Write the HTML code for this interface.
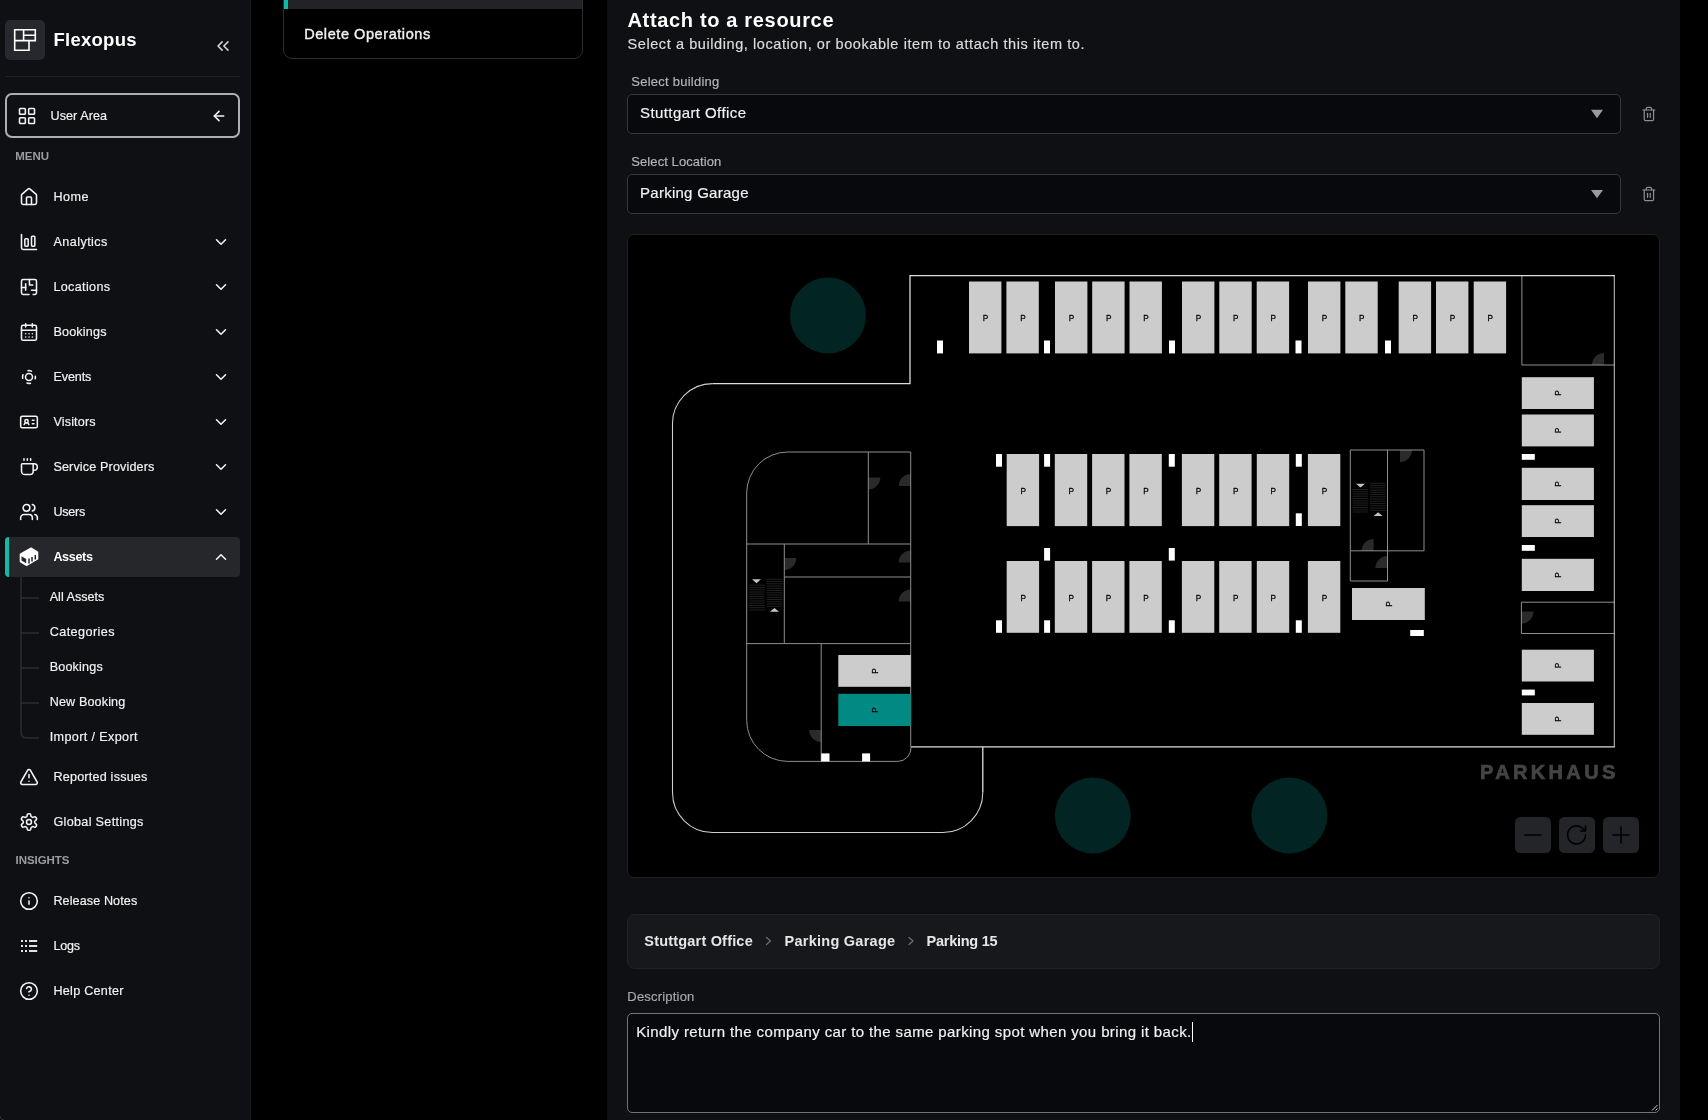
<!DOCTYPE html>
<html lang="en">
<head>
<meta charset="utf-8">
<title>Flexopus - Attach to a resource</title>
<style>
html,body{margin:0;padding:0;background:#000;}
body{width:1708px;height:1120px;position:relative;overflow:hidden;font-family:'Liberation Sans',sans-serif;}
.a{position:absolute;box-sizing:border-box;}
.t{position:absolute;white-space:pre;line-height:20px;font-family:'Liberation Sans',sans-serif;}
svg{position:absolute;overflow:visible;}
.ic{fill:none;stroke:#f4f4f4;stroke-width:1.9;stroke-linecap:round;stroke-linejoin:round;}
</style>
</head>
<body>
<div id="root" style="position:absolute;left:0;top:0;width:1708px;height:1120px;will-change:transform;">
<aside aria-label="Sidebar navigation">
<div class="a" id="sidebar" style="left:0;top:0;width:250px;height:1120px;background:#0f1014;"></div>
<div class="a" style="left:250px;top:0;width:1px;height:1120px;background:#1b1c20;"></div>
<div class="a" style="left:5px;top:20px;width:40px;height:40px;border-radius:5px;background:#26282d;"></div>
<div class="a" style="left:5px;top:76px;width:235px;height:1px;background:#1f2125;"></div>
<div class="a" style="left:5px;top:93px;width:235px;height:45px;border:2px solid #aeafb2;border-radius:7px;"></div>
<!-- active item -->
<div class="a" style="left:5px;top:537px;width:235px;height:40px;border-radius:4px;background:#26272b;overflow:hidden;"><div class="a" style="left:0;top:0;width:4px;height:40px;background:#14b8a6;"></div></div>
<!-- tree -->
<svg width="250" height="1120" style="left:0;top:0" fill="none" stroke="#2b2d31" stroke-width="1.5">
<path d="M21 577 V732 Q21 738 27 738 H39"/>
<path d="M21 598 H39 M21 633 H39 M21 668 H39 M21 703 H39"/>
</svg>
<svg width="40" height="40" style="left:5px;top:20px" fill="none" stroke="#ffffff" stroke-width="1.6"><path d="M9.7 9.7 H30.3 V20.6 H9.7 Z M18.6 9.7 V20.6 M18.6 15.2 H30.3 M9.7 20.6 V30.2 H24 V20.6"/></svg>
<svg width="20" height="20" viewBox="0 0 24 24" style="left:213px;top:36px" fill="none" stroke="#cfd2d9" stroke-width="1.86" stroke-linecap="round" stroke-linejoin="round" ><path d="m11 17-5-5 5-5"/><path d="m18 17-5-5 5-5"/></svg>
<svg width="20" height="20" viewBox="0 0 24 24" style="left:17px;top:106px" fill="none" stroke="#f4f4f4" stroke-width="1.86" stroke-linecap="round" stroke-linejoin="round" ><rect width="7" height="7" x="3" y="3" rx="1"/><rect width="7" height="7" x="14" y="3" rx="1"/><rect width="7" height="7" x="14" y="14" rx="1"/><rect width="7" height="7" x="3" y="14" rx="1"/></svg>
<svg width="16" height="16" viewBox="0 0 24 24" style="left:210.9px;top:108.1px" fill="none" stroke="#f4f4f4" stroke-width="2.33" stroke-linecap="round" stroke-linejoin="round" ><path d="m12 19-7-7 7-7"/><path d="M19 12H5"/></svg>
<svg width="20" height="20" viewBox="0 0 24 24" style="left:19px;top:186.5px" fill="none" stroke="#f4f4f4" stroke-width="1.86" stroke-linecap="round" stroke-linejoin="round" ><path d="M15 21v-8a1 1 0 0 0-1-1h-4a1 1 0 0 0-1 1v8"/><path d="M3 10a2 2 0 0 1 .709-1.528l7-5.999a2 2 0 0 1 2.582 0l7 5.999A2 2 0 0 1 21 10v9a2 2 0 0 1-2 2H5a2 2 0 0 1-2-2z"/></svg>
<svg width="20" height="20" viewBox="0 0 24 24" style="left:19px;top:232.0px" fill="none" stroke="#f4f4f4" stroke-width="1.86" stroke-linecap="round" stroke-linejoin="round" ><path d="M3 3v16a2 2 0 0 0 2 2h16"/><rect x="15" y="5" width="4" height="12" rx="1"/><rect x="7" y="8" width="4" height="9" rx="1"/></svg>
<svg width="20" height="20" viewBox="0 0 24 24" style="left:19px;top:277.0px" fill="none" stroke="#f4f4f4" stroke-width="1.86" stroke-linecap="round" stroke-linejoin="round" ><path d="M12 21H5a2 2 0 0 1-2-2V5a2 2 0 0 1 2-2h14a2 2 0 0 1 2 2v14a2 2 0 0 1-2 2h-2"/><path d="M3 12.5h5"/><path d="M8 8v8"/><path d="M12.5 3v6.5h4"/><path d="M15 16h6"/></svg>
<svg width="20" height="20" viewBox="0 0 24 24" style="left:19px;top:322.0px" fill="none" stroke="#f4f4f4" stroke-width="1.86" stroke-linecap="round" stroke-linejoin="round" ><path d="M8 2v4"/><path d="M16 2v4"/><rect width="18" height="18" x="3" y="4" rx="2"/><path d="M3 10h18"/><path d="M8 14h.01"/><path d="M12 14h.01"/><path d="M16 14h.01"/><path d="M8 18h.01"/><path d="M12 18h.01"/><path d="M16 18h.01"/></svg>
<svg width="20" height="20" viewBox="0 0 24 24" style="left:19px;top:367.0px" fill="none" stroke="#f4f4f4" stroke-width="1.86" stroke-linecap="round" stroke-linejoin="round" ><circle cx="12" cy="12" r="4.2"/><circle cx="12" cy="12" r="7.7" stroke-dasharray="4.4 7.695" stroke-dashoffset="2.2"/></svg>
<svg width="20" height="20" viewBox="0 0 24 24" style="left:19px;top:412.0px" fill="none" stroke="#f4f4f4" stroke-width="1.86" stroke-linecap="round" stroke-linejoin="round" ><path d="M16 10h2"/><path d="M16 14h2"/><path d="M6.17 15a3 3 0 0 1 5.66 0"/><circle cx="9" cy="11" r="2"/><rect x="2" y="5" width="20" height="14" rx="2"/></svg>
<svg width="20" height="20" viewBox="0 0 24 24" style="left:19px;top:457.0px" fill="none" stroke="#f4f4f4" stroke-width="1.86" stroke-linecap="round" stroke-linejoin="round" ><path d="M10 2v2"/><path d="M14 2v2"/><path d="M16 8a1 1 0 0 1 1 1v8a4 4 0 0 1-4 4H7a4 4 0 0 1-4-4V9a1 1 0 0 1 1-1h14a4 4 0 1 1 0 8h-1"/><path d="M6 2v2"/></svg>
<svg width="20" height="20" viewBox="0 0 24 24" style="left:19px;top:501.6px" fill="none" stroke="#f4f4f4" stroke-width="1.86" stroke-linecap="round" stroke-linejoin="round" ><path d="M16 21v-2a4 4 0 0 0-4-4H6a4 4 0 0 0-4 4v2"/><circle cx="9" cy="7" r="4"/><path d="M22 21v-2a4 4 0 0 0-3-3.87"/><path d="M16 3.13a4 4 0 0 1 0 7.75"/></svg>
<svg width="250" height="1120" style="left:0;top:0"><path d="M31.1 548.2 L37.6 552.2 V559 L26.6 565.4 L20.4 561.6 V554.2 Z" fill="#ffffff" stroke="#ffffff" stroke-width="1.4" stroke-linejoin="round"/><path d="M21.5 556.3 L26.2 559.1 V563.3 L21.5 560.4 Z" fill="#26272b"/><path d="M29 558.6 V563.4 M32 556.9 V561.6 M35.3 555 V559.6" stroke="#26272b" stroke-width="1.5"/></svg>
<svg width="20" height="20" viewBox="0 0 24 24" style="left:19px;top:767.0px" fill="none" stroke="#f4f4f4" stroke-width="1.86" stroke-linecap="round" stroke-linejoin="round" ><path d="m21.73 18-8-14a2 2 0 0 0-3.48 0l-8 14A2 2 0 0 0 4 21h16a2 2 0 0 0 1.73-3"/><path d="M12 9v4"/><path d="M12 17h.01"/></svg>
<svg width="20" height="20" viewBox="0 0 24 24" style="left:19px;top:812.0px" fill="none" stroke="#f4f4f4" stroke-width="1.86" stroke-linecap="round" stroke-linejoin="round" ><path d="M12.22 2h-.44a2 2 0 0 0-2 2v.18a2 2 0 0 1-1 1.73l-.43.25a2 2 0 0 1-2 0l-.15-.08a2 2 0 0 0-2.73.73l-.22.38a2 2 0 0 0 .73 2.73l.15.1a2 2 0 0 1 1 1.72v.51a2 2 0 0 1-1 1.74l-.15.09a2 2 0 0 0-.73 2.73l.22.38a2 2 0 0 0 2.73.73l.15-.08a2 2 0 0 1 2 0l.43.25a2 2 0 0 1 1 1.73V20a2 2 0 0 0 2 2h.44a2 2 0 0 0 2-2v-.18a2 2 0 0 1 1-1.73l.43-.25a2 2 0 0 1 2 0l.15.08a2 2 0 0 0 2.73-.73l.22-.39a2 2 0 0 0-.73-2.73l-.15-.08a2 2 0 0 1-1-1.74v-.5a2 2 0 0 1 1-1.74l.15-.09a2 2 0 0 0 .73-2.73l-.22-.38a2 2 0 0 0-2.73-.73l-.15.08a2 2 0 0 1-2 0l-.43-.25a2 2 0 0 1-1-1.73V4a2 2 0 0 0-2-2z"/><circle cx="12" cy="12" r="3"/></svg>
<svg width="20" height="20" viewBox="0 0 24 24" style="left:19px;top:891.0px" fill="none" stroke="#f4f4f4" stroke-width="1.86" stroke-linecap="round" stroke-linejoin="round" ><circle cx="12" cy="12" r="10"/><path d="M12 16v-4"/><path d="M12 8h.01"/></svg>
<svg width="250" height="1120" style="left:0;top:0" fill="#e2e2e2"><rect x="21" y="940" width="2" height="2"/><rect x="25" y="940" width="2" height="2"/><rect x="29" y="940" width="8.2" height="2"/><rect x="21" y="945" width="2" height="2"/><rect x="25" y="945" width="2" height="2"/><rect x="29" y="945" width="8.2" height="2"/><rect x="21" y="950" width="2" height="2"/><rect x="25" y="950" width="2" height="2"/><rect x="29" y="950" width="8.2" height="2"/></svg>
<svg width="20" height="20" viewBox="0 0 24 24" style="left:19px;top:981.0px" fill="none" stroke="#f4f4f4" stroke-width="1.86" stroke-linecap="round" stroke-linejoin="round" ><circle cx="12" cy="12" r="10"/><path d="M9.09 9a3 3 0 0 1 5.83 1c0 2-3 3-3 3"/><path d="M12 17h.01"/></svg>
<svg width="18" height="18" viewBox="0 0 24 24" style="left:212px;top:233px" fill="none" stroke="#f4f4f4" stroke-width="2.07" stroke-linecap="round" stroke-linejoin="round" ><path d="m6 9 6 6 6-6"/></svg>
<svg width="18" height="18" viewBox="0 0 24 24" style="left:212px;top:278px" fill="none" stroke="#f4f4f4" stroke-width="2.07" stroke-linecap="round" stroke-linejoin="round" ><path d="m6 9 6 6 6-6"/></svg>
<svg width="18" height="18" viewBox="0 0 24 24" style="left:212px;top:323px" fill="none" stroke="#f4f4f4" stroke-width="2.07" stroke-linecap="round" stroke-linejoin="round" ><path d="m6 9 6 6 6-6"/></svg>
<svg width="18" height="18" viewBox="0 0 24 24" style="left:212px;top:368px" fill="none" stroke="#f4f4f4" stroke-width="2.07" stroke-linecap="round" stroke-linejoin="round" ><path d="m6 9 6 6 6-6"/></svg>
<svg width="18" height="18" viewBox="0 0 24 24" style="left:212px;top:413px" fill="none" stroke="#f4f4f4" stroke-width="2.07" stroke-linecap="round" stroke-linejoin="round" ><path d="m6 9 6 6 6-6"/></svg>
<svg width="18" height="18" viewBox="0 0 24 24" style="left:212px;top:458px" fill="none" stroke="#f4f4f4" stroke-width="2.07" stroke-linecap="round" stroke-linejoin="round" ><path d="m6 9 6 6 6-6"/></svg>
<svg width="18" height="18" viewBox="0 0 24 24" style="left:212px;top:503px" fill="none" stroke="#f4f4f4" stroke-width="2.07" stroke-linecap="round" stroke-linejoin="round" ><path d="m6 9 6 6 6-6"/></svg>
<svg width="18" height="18" viewBox="0 0 24 24" style="left:212px;top:548px" fill="none" stroke="#f4f4f4" stroke-width="2.07" stroke-linecap="round" stroke-linejoin="round" ><path d="m18 15-6-6-6 6"/></svg>
<svg width="6" height="6" style="left:0;top:1114px"><path d="M0 2.5 A3.5 3.5 0 0 0 3.5 6 L0 6 Z" fill="#000"/><path d="M0 2 A4 4 0 0 0 4 6" fill="none" stroke="#2b2d31" stroke-width="1"/></svg>
<span class="t" style="left:53.5px;top:29.59px;font-size:18.5px;font-weight:700;color:#ffffff;letter-spacing:0.254px">Flexopus</span>
<span class="t" style="-webkit-text-stroke:0.18px #f2f2f2;left:50.5px;top:105.93px;font-size:12.6px;font-weight:400;color:#f2f2f2;letter-spacing:0.062px">User Area</span>
<span class="t" style="left:15.3px;top:146.02px;font-size:11.5px;font-weight:700;color:#9b9c9f;letter-spacing:-0.058px">MENU</span>
<span class="t" style="-webkit-text-stroke:0.18px #f2f2f2;left:53.4px;top:186.63px;font-size:12.6px;font-weight:400;color:#f2f2f2;letter-spacing:0.469px">Home</span>
<span class="t" style="-webkit-text-stroke:0.18px #f2f2f2;left:53.4px;top:231.63px;font-size:12.6px;font-weight:400;color:#f2f2f2;letter-spacing:0.449px">Analytics</span>
<span class="t" style="-webkit-text-stroke:0.18px #f2f2f2;left:53.4px;top:276.63px;font-size:12.6px;font-weight:400;color:#f2f2f2;letter-spacing:0.347px">Locations</span>
<span class="t" style="-webkit-text-stroke:0.18px #f2f2f2;left:53.4px;top:321.63px;font-size:12.6px;font-weight:400;color:#f2f2f2;letter-spacing:0.184px">Bookings</span>
<span class="t" style="-webkit-text-stroke:0.18px #f2f2f2;left:53.4px;top:366.63px;font-size:12.6px;font-weight:400;color:#f2f2f2;letter-spacing:-0.103px">Events</span>
<span class="t" style="-webkit-text-stroke:0.18px #f2f2f2;left:53.4px;top:411.63px;font-size:12.6px;font-weight:400;color:#f2f2f2;letter-spacing:0.163px">Visitors</span>
<span class="t" style="-webkit-text-stroke:0.18px #f2f2f2;left:53.4px;top:456.63px;font-size:12.6px;font-weight:400;color:#f2f2f2;letter-spacing:0.145px">Service Providers</span>
<span class="t" style="-webkit-text-stroke:0.18px #f2f2f2;left:53.4px;top:501.63px;font-size:12.6px;font-weight:400;color:#f2f2f2;letter-spacing:-0.223px">Users</span>
<span class="t" style="left:53.4px;top:546.63px;font-size:12.6px;font-weight:700;color:#ffffff;letter-spacing:-0.362px">Assets</span>
<span class="t" style="-webkit-text-stroke:0.18px #f2f2f2;left:49.7px;top:586.63px;font-size:12.6px;font-weight:400;color:#f2f2f2;letter-spacing:0.012px">All Assets</span>
<span class="t" style="-webkit-text-stroke:0.18px #f2f2f2;left:49.7px;top:621.63px;font-size:12.6px;font-weight:400;color:#f2f2f2;letter-spacing:0.433px">Categories</span>
<span class="t" style="-webkit-text-stroke:0.18px #f2f2f2;left:49.7px;top:656.63px;font-size:12.6px;font-weight:400;color:#f2f2f2;letter-spacing:0.170px">Bookings</span>
<span class="t" style="-webkit-text-stroke:0.18px #f2f2f2;left:49.7px;top:691.63px;font-size:12.6px;font-weight:400;color:#f2f2f2;letter-spacing:0.138px">New Booking</span>
<span class="t" style="-webkit-text-stroke:0.18px #f2f2f2;left:49.7px;top:726.63px;font-size:12.6px;font-weight:400;color:#f2f2f2;letter-spacing:0.372px">Import / Export</span>
<span class="t" style="-webkit-text-stroke:0.18px #f2f2f2;left:53.4px;top:766.63px;font-size:12.6px;font-weight:400;color:#f2f2f2;letter-spacing:0.213px">Reported issues</span>
<span class="t" style="-webkit-text-stroke:0.18px #f2f2f2;left:53.4px;top:811.63px;font-size:12.6px;font-weight:400;color:#f2f2f2;letter-spacing:0.327px">Global Settings</span>
<span class="t" style="left:15.5px;top:850.42px;font-size:11.5px;font-weight:700;color:#9b9c9f;letter-spacing:-0.045px">INSIGHTS</span>
<span class="t" style="-webkit-text-stroke:0.18px #f2f2f2;left:53.4px;top:890.63px;font-size:12.6px;font-weight:400;color:#f2f2f2;letter-spacing:0.099px">Release Notes</span>
<span class="t" style="-webkit-text-stroke:0.18px #f2f2f2;left:53.4px;top:935.63px;font-size:12.6px;font-weight:400;color:#f2f2f2;letter-spacing:-0.204px">Logs</span>
<span class="t" style="-webkit-text-stroke:0.18px #f2f2f2;left:53.4px;top:980.63px;font-size:12.6px;font-weight:400;color:#f2f2f2;letter-spacing:0.280px">Help Center</span>
</aside>
<main>
<div class="a" style="left:283px;top:-20px;width:300px;height:79px;border:1px solid #2a2d31;border-radius:9px;background:#000;overflow:hidden;">
  <div class="a" style="left:0;top:0;width:300px;height:28px;background:#222327;"></div>
  <div class="a" style="left:0;top:0;width:4px;height:28px;background:#14b8a6;"></div>
</div>
<div class="a" id="panel" style="left:607px;top:0;width:1073px;height:1120px;background:#0f1014;"></div>
<div class="a" style="left:627px;top:94px;width:994px;height:40px;border:1px solid #35373c;border-radius:5px;background:#08090d;"></div>
<div class="a" style="left:627px;top:174px;width:994px;height:40px;border:1px solid #35373c;border-radius:5px;background:#08090d;"></div>
<div class="a" style="left:627px;top:234px;width:1033px;height:644px;border:1px solid #1d1f23;border-radius:7px;background:#000;"></div>
<div class="a" style="left:627px;top:914px;width:1033px;height:55px;border:1px solid #212226;border-radius:8px;background:#17181c;"></div>
<div class="a" style="left:627px;top:1013px;width:1033px;height:100px;border:1px solid #717378;border-radius:5px;background:#08090d;"></div>
<div class="a" style="left:1192px;top:1022px;width:1px;height:20px;background:#fff;"></div>
<svg width="1708" height="1120" style="left:0;top:0" font-family="'Liberation Sans',sans-serif">
<circle cx="828" cy="315.5" r="38" fill="#022523"/>
<circle cx="1092.8" cy="815.5" r="38" fill="#022523"/>
<circle cx="1289.4" cy="815.5" r="38" fill="#022523"/>
<path d="M868.3 477.4 L880.3 477.4 A12 12 0 0 1 868.3 489.4 Z" fill="#2a2a2a"/>
<path d="M910.7 486 L898.7 486 A12 12 0 0 1 910.7 474 Z" fill="#2a2a2a"/>
<path d="M784.3 558 L796.3 558 A12 12 0 0 1 784.3 570 Z" fill="#2a2a2a"/>
<path d="M910.7 562.6 L898.7 562.6 A12 12 0 0 1 910.7 550.6 Z" fill="#2a2a2a"/>
<path d="M910.7 601.4 L898.7 601.4 A12 12 0 0 1 910.7 589.4 Z" fill="#2a2a2a"/>
<path d="M821.2 730 L809.2 730 A12 12 0 0 0 821.2 742 Z" fill="#2a2a2a"/>
<path d="M1400 450 L1412 450 A12 12 0 0 1 1400 462 Z" fill="#2a2a2a"/>
<path d="M1373.6 551 L1361.6 551 A12 12 0 0 1 1373.6 539 Z" fill="#2a2a2a"/>
<path d="M1387.5 568 L1375.5 568 A12 12 0 0 1 1387.5 556 Z" fill="#2a2a2a"/>
<path d="M1604 365 L1592 365 A12 12 0 0 1 1604 353 Z" fill="#2a2a2a"/>
<path d="M1521.5 611.6 L1533.5 611.6 A12 12 0 0 1 1521.5 623.6 Z" fill="#2a2a2a"/>
<g fill="none" stroke="#8e8e8e" stroke-width="1">
<path d="M910.7 452 H787.7 A41 41 0 0 0 746.7 493 V720.4 A41 41 0 0 0 787.7 761.4 H897.9 A13.3 14.5 0 0 0 911.2 746.9 M910.7 452 V746.9"/>
<path d="M868.3 452 V544 M746.7 544 H910.7 M784.3 544 V643.6 M784.3 577 H910.7 M746.7 643.6 H910.7 M821.2 643.6 V761.4"/>
<path d="M1521.9 275.7 V365 H1614.2"/>
<path d="M1350.3 450 H1424 V550.8 H1350.3 Z M1387.5 450 V581 H1350.3 V550.8"/>
<path d="M1614 602.2 H1521.4 V633.5 H1614"/>
</g>
<g fill="none" stroke="#dcdcdc" stroke-width="1.3">
<path d="M1614.3 275.7 V746.8" stroke="#b8b8b8" stroke-width="1.1"/>
<path d="M911.2 746.8 H1614.9 M982.8 746.8 V792.5" />
<path d="M982.8 792.5 A40 40 0 0 1 942.8 832.5 H712.5 A40 40 0 0 1 672.5 792.5 V423.6 A40 40 0 0 1 712.5 383.6" stroke-width="1.05" stroke="#cfcfcf"/>
<path d="M712.5 383.6 H910 V275.7 H1614.9"/>
</g>
<path d="M749.2 585.2 H764.8 M749.2 587.5 H764.8 M749.2 589.7 H764.8 M749.2 592.0 H764.8 M749.2 594.2 H764.8 M749.2 596.5 H764.8 M749.2 598.7 H764.8 M749.2 601.0 H764.8 M749.2 603.2 H764.8 M749.2 605.5 H764.8 M749.2 607.7 H764.8 M749.2 610.0 H764.8" stroke="#353535" stroke-width="0.6" fill="none"/>
<path d="M766.6 579.3 H782.4 M766.6 581.5 H782.4 M766.6 583.8 H782.4 M766.6 586.0 H782.4 M766.6 588.3 H782.4 M766.6 590.5 H782.4 M766.6 592.8 H782.4 M766.6 595.0 H782.4 M766.6 597.3 H782.4 M766.6 599.5 H782.4 M766.6 601.8 H782.4 M766.6 604.0 H782.4 M766.6 606.3 H782.4" stroke="#353535" stroke-width="0.6" fill="none"/>
<path d="M1352.7 489.5 H1368 M1352.7 491.8 H1368 M1352.7 494.0 H1368 M1352.7 496.2 H1368 M1352.7 498.5 H1368 M1352.7 500.8 H1368 M1352.7 503.0 H1368 M1352.7 505.2 H1368 M1352.7 507.5 H1368 M1352.7 509.8 H1368 M1352.7 512.0 H1368" stroke="#353535" stroke-width="0.6" fill="none"/>
<path d="M1370 483.3 H1385.6 M1370 485.6 H1385.6 M1370 487.8 H1385.6 M1370 490.1 H1385.6 M1370 492.3 H1385.6 M1370 494.6 H1385.6 M1370 496.8 H1385.6 M1370 499.1 H1385.6 M1370 501.3 H1385.6 M1370 503.6 H1385.6 M1370 505.8 H1385.6 M1370 508.1 H1385.6 M1370 510.3 H1385.6" stroke="#353535" stroke-width="0.6" fill="none"/>
<path d="M752 579.3 H761 L756.5 583.3 Z M770 611.8 H779 L774.5 608 Z M1356 483.7 H1365 L1360.5 487.5 Z M1373.6 516 H1382.6 L1378.1 512.2 Z" fill="#c4c4c4"/>
<g fill="#cccccc">
<rect x="969" y="281.5" width="32.4" height="71.9"/>
<rect x="1006.4" y="281.5" width="32.4" height="71.9"/>
<rect x="1055" y="281.5" width="32.4" height="71.9"/>
<rect x="1092.2" y="281.5" width="32.4" height="71.9"/>
<rect x="1129.5" y="281.5" width="32.4" height="71.9"/>
<rect x="1182" y="281.5" width="32.4" height="71.9"/>
<rect x="1219.3" y="281.5" width="32.4" height="71.9"/>
<rect x="1256.7" y="281.5" width="32.4" height="71.9"/>
<rect x="1308" y="281.5" width="32.4" height="71.9"/>
<rect x="1345.3" y="281.5" width="32.4" height="71.9"/>
<rect x="1398.7" y="281.5" width="32.4" height="71.9"/>
<rect x="1436" y="281.5" width="32.4" height="71.9"/>
<rect x="1473.7" y="281.5" width="32.4" height="71.9"/>
<rect x="1006.7" y="454" width="32.4" height="72.1"/>
<rect x="1054.8" y="454" width="32.4" height="72.1"/>
<rect x="1092.1" y="454" width="32.4" height="72.1"/>
<rect x="1129.4" y="454" width="32.4" height="72.1"/>
<rect x="1181.9" y="454" width="32.4" height="72.1"/>
<rect x="1219.2" y="454" width="32.4" height="72.1"/>
<rect x="1256.8" y="454" width="32.4" height="72.1"/>
<rect x="1307.9" y="454" width="32.4" height="72.1"/>
<rect x="1006.7" y="561" width="32.4" height="71.8"/>
<rect x="1054.8" y="561" width="32.4" height="71.8"/>
<rect x="1092.1" y="561" width="32.4" height="71.8"/>
<rect x="1129.4" y="561" width="32.4" height="71.8"/>
<rect x="1181.9" y="561" width="32.4" height="71.8"/>
<rect x="1219.2" y="561" width="32.4" height="71.8"/>
<rect x="1256.8" y="561" width="32.4" height="71.8"/>
<rect x="1307.9" y="561" width="32.4" height="71.8"/>
<rect x="1521.8" y="377.2" width="72.1" height="31.8"/>
<rect x="1521.8" y="414.5" width="72.1" height="31.9"/>
<rect x="1521.8" y="467.8" width="72.1" height="32.2"/>
<rect x="1521.8" y="505.2" width="72.1" height="31.8"/>
<rect x="1521.8" y="558.8" width="72.1" height="32.2"/>
<rect x="1521.8" y="649.7" width="72.1" height="31.8"/>
<rect x="1521.8" y="703" width="72.1" height="31.8"/>
<rect x="1352" y="588" width="72.8" height="32"/>
<rect x="838.3" y="655" width="72.5" height="31.8"/>
</g>
<rect x="838.3" y="693.8" width="72.5" height="32.2" fill="#008a83"/>
<g fill="#ffffff">
<rect x="937" y="340.5" width="6" height="12.9"/>
<rect x="1044" y="340.5" width="6" height="12.9"/>
<rect x="1169" y="340.5" width="6" height="12.9"/>
<rect x="1295.5" y="340.5" width="6" height="12.9"/>
<rect x="1385" y="340.5" width="6" height="12.9"/>
<rect x="996" y="454" width="6" height="12.7"/>
<rect x="996" y="620.3" width="6" height="12.5"/>
<rect x="1044.1" y="454" width="6" height="12.7"/>
<rect x="1044.1" y="620.3" width="6" height="12.5"/>
<rect x="1168.8" y="454" width="6" height="12.7"/>
<rect x="1168.8" y="620.3" width="6" height="12.5"/>
<rect x="1295.8" y="454" width="6" height="12.7"/>
<rect x="1295.8" y="620.3" width="6" height="12.5"/>
<rect x="1295.8" y="513.3" width="6" height="12.7"/>
<rect x="1044.1" y="548" width="6" height="12.6"/>
<rect x="1168.8" y="548" width="6" height="12.6"/>
<rect x="1521.8" y="454" width="13" height="5.8"/>
<rect x="1521.8" y="545" width="13" height="5.8"/>
<rect x="1521.8" y="689.6" width="13" height="5.8"/>
<rect x="1410.2" y="630" width="13.6" height="6"/>
<rect x="821.2" y="753.4" width="8.3" height="8"/><rect x="862.1" y="753.4" width="8" height="8"/>
</g>
<g fill="#000" font-size="9.6" text-anchor="middle" stroke="#000" stroke-width="0.25">
<text transform="translate(985.5 321.1) scale(0.86 1)">P</text>
<text transform="translate(1022.9 321.1) scale(0.86 1)">P</text>
<text transform="translate(1071.5 321.1) scale(0.86 1)">P</text>
<text transform="translate(1108.7 321.1) scale(0.86 1)">P</text>
<text transform="translate(1146.0 321.1) scale(0.86 1)">P</text>
<text transform="translate(1198.5 321.1) scale(0.86 1)">P</text>
<text transform="translate(1235.8 321.1) scale(0.86 1)">P</text>
<text transform="translate(1273.2 321.1) scale(0.86 1)">P</text>
<text transform="translate(1324.5 321.1) scale(0.86 1)">P</text>
<text transform="translate(1361.8 321.1) scale(0.86 1)">P</text>
<text transform="translate(1415.2 321.1) scale(0.86 1)">P</text>
<text transform="translate(1452.5 321.1) scale(0.86 1)">P</text>
<text transform="translate(1490.2 321.1) scale(0.86 1)">P</text>
<text transform="translate(1023.2 493.7) scale(0.86 1)">P</text>
<text transform="translate(1071.3 493.7) scale(0.86 1)">P</text>
<text transform="translate(1108.6 493.7) scale(0.86 1)">P</text>
<text transform="translate(1145.9 493.7) scale(0.86 1)">P</text>
<text transform="translate(1198.4 493.7) scale(0.86 1)">P</text>
<text transform="translate(1235.7 493.7) scale(0.86 1)">P</text>
<text transform="translate(1273.3 493.7) scale(0.86 1)">P</text>
<text transform="translate(1324.4 493.7) scale(0.86 1)">P</text>
<text transform="translate(1023.2 600.5) scale(0.86 1)">P</text>
<text transform="translate(1071.3 600.5) scale(0.86 1)">P</text>
<text transform="translate(1108.6 600.5) scale(0.86 1)">P</text>
<text transform="translate(1145.9 600.5) scale(0.86 1)">P</text>
<text transform="translate(1198.4 600.5) scale(0.86 1)">P</text>
<text transform="translate(1235.7 600.5) scale(0.86 1)">P</text>
<text transform="translate(1273.3 600.5) scale(0.86 1)">P</text>
<text transform="translate(1324.4 600.5) scale(0.86 1)">P</text>
<text transform="translate(1561.3 393.1) rotate(-90) scale(0.86 1)">P</text>
<text transform="translate(1561.3 430.4) rotate(-90) scale(0.86 1)">P</text>
<text transform="translate(1561.3 483.9) rotate(-90) scale(0.86 1)">P</text>
<text transform="translate(1561.3 521.1) rotate(-90) scale(0.86 1)">P</text>
<text transform="translate(1561.3 574.9) rotate(-90) scale(0.86 1)">P</text>
<text transform="translate(1561.3 665.6) rotate(-90) scale(0.86 1)">P</text>
<text transform="translate(1561.3 718.9) rotate(-90) scale(0.86 1)">P</text>
<text transform="translate(1391.9 604.0) rotate(-90) scale(0.86 1)">P</text>
<text transform="translate(878.0 670.9) rotate(-90) scale(0.86 1)">P</text>
<text transform="translate(878.0 709.9) rotate(-90) scale(0.86 1)">P</text>
</g>
<rect x="1515" y="817" width="36" height="36" rx="5.5" fill="#242528"/>
<rect x="1559" y="817" width="36" height="36" rx="5.5" fill="#242528"/>
<rect x="1603" y="817" width="36" height="36" rx="5.5" fill="#242528"/>
<g fill="none" stroke="#000" stroke-width="1.6" stroke-linecap="round" stroke-linejoin="round">
<path d="M1525 835 H1541"/>
<path d="M1613 835 H1629 M1621 827 V843"/>
<path d="M1585.5 835 A9 9 0 1 1 1582.9 828.6 L1585.5 831 M1585.5 826 V831 H1580.5"/>
</g>
<path d="M1591 109.8 H1603 L1597 118.2 Z" fill="#9a9a9b"/>
<path d="M1591 189.9 H1603 L1597 198.3 Z" fill="#9a9a9b"/>
<g transform="translate(1640.9 106) scale(0.667)" fill="none" stroke="#8d8d8f" stroke-width="1.85" stroke-linecap="round" stroke-linejoin="round"><path d="M3 6h18"/><path d="M19 6v14c0 1-1 2-2 2H7c-1 0-2-1-2-2V6"/><path d="M8 6V4c0-1 1-2 2-2h4c1 0 2 1 2 2v2"/><path d="M10 11v6 M14 11v6"/></g>
<g transform="translate(1640.9 186) scale(0.667)" fill="none" stroke="#8d8d8f" stroke-width="1.85" stroke-linecap="round" stroke-linejoin="round"><path d="M3 6h18"/><path d="M19 6v14c0 1-1 2-2 2H7c-1 0-2-1-2-2V6"/><path d="M8 6V4c0-1 1-2 2-2h4c1 0 2 1 2 2v2"/><path d="M10 11v6 M14 11v6"/></g>
<path d="M766.5 937.5 L770.5 941 L766.5 944.5" fill="none" stroke="#707072" stroke-width="1.2" stroke-linecap="round" stroke-linejoin="round"/>
<path d="M909 937.5 L913 941 L909 944.5" fill="none" stroke="#707072" stroke-width="1.2" stroke-linecap="round" stroke-linejoin="round"/>
<path d="M1657.5 1105 L1652 1110.5 M1657.5 1108.5 L1655.5 1110.5" stroke="#c8c8c8" stroke-width="1" fill="none"/>
</svg>
<span class="t" style="-webkit-text-stroke:0.4px #f0f0f0;left:304.2px;top:23.98px;font-size:14.5px;font-weight:400;color:#f0f0f0;letter-spacing:0.570px">Delete Operations</span>
<span class="t" style="left:627.5px;top:10.27px;font-size:20px;font-weight:700;color:#ffffff;letter-spacing:0.664px">Attach to a resource</span>
<span class="t" style="-webkit-text-stroke:0.18px #dcdcdc;left:627.5px;top:34.18px;font-size:14.5px;font-weight:400;color:#dcdcdc;letter-spacing:0.581px">Select a building, location, or bookable item to attach this item to.</span>
<span class="t" style="-webkit-text-stroke:0.18px #b4b4b6;left:631.3px;top:71.90px;font-size:13px;font-weight:400;color:#b4b4b6;letter-spacing:0.246px">Select building</span>
<span class="t" style="-webkit-text-stroke:0.18px #b4b4b6;left:631.3px;top:151.90px;font-size:13px;font-weight:400;color:#b4b4b6;letter-spacing:0.078px">Select Location</span>
<span class="t" style="-webkit-text-stroke:0.18px #f2f2f2;left:640.0px;top:102.80px;font-size:15px;font-weight:400;color:#f2f2f2;letter-spacing:0.415px">Stuttgart Office</span>
<span class="t" style="-webkit-text-stroke:0.18px #f2f2f2;left:640.0px;top:182.80px;font-size:15px;font-weight:400;color:#f2f2f2;letter-spacing:0.264px">Parking Garage</span>
<span class="t" style="left:644.3px;top:931.18px;font-size:14.5px;font-weight:700;color:#e6e6e6;letter-spacing:0.191px">Stuttgart Office</span>
<span class="t" style="left:784.5px;top:931.18px;font-size:14.5px;font-weight:700;color:#e6e6e6;letter-spacing:0.262px">Parking Garage</span>
<span class="t" style="left:926.6px;top:931.18px;font-size:14.5px;font-weight:700;color:#e6e6e6;letter-spacing:-0.260px">Parking 15</span>
<span class="t" style="-webkit-text-stroke:0.18px #a8a8aa;left:627.3px;top:986.80px;font-size:13px;font-weight:400;color:#a8a8aa;letter-spacing:0.197px">Description</span>
<span class="t" style="-webkit-text-stroke:0.18px #f2f2f2;left:636.2px;top:1022.00px;font-size:15px;font-weight:400;color:#f2f2f2;letter-spacing:0.386px">Kindly return the company car to the same parking spot when you bring it back.</span>
<span class="t" style="-webkit-text-stroke:0.7px #444;left:1480.0px;top:762.07px;font-size:20px;font-weight:700;color:#444444;letter-spacing:3.349px">PARKHAUS</span>
</main>
</div>
</body>
</html>
